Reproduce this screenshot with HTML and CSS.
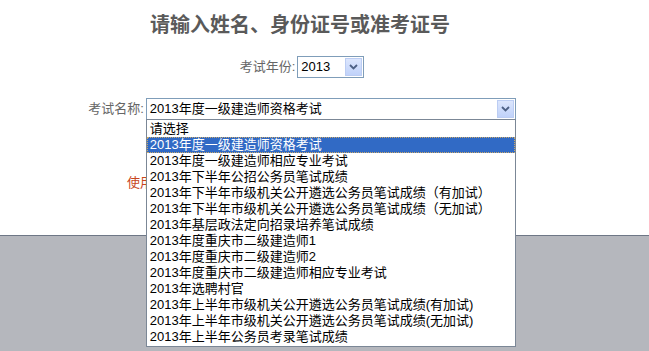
FILE: index.html
```html
<!DOCTYPE html>
<html>
  <head>
    <meta charset="utf-8">
    <title>成绩查询</title>
    <link rel="stylesheet" href="styles.css">
  </head>
  <body>
  <main class="query">
    <h1 class="query__title">请输入姓名、身份证号或准考证号</h1>
    <div class="field">
      <span class="field__label">考试年份:</span>
      <div class="combo combo--year">
        <span class="combo__value">2013</span>
        <span class="combo__btn"><svg width="9" height="6" viewBox="0 0 9 6"><path d="M1 1 L4.5 4.5 L8 1" fill="none" stroke="#4d6185" stroke-width="1.8"/></svg></span>
      </div>
    </div>
    <div class="field field--name">
      <span class="field__label">考试名称:</span>
      <div class="combo combo--name">
        <span class="combo__value">2013年度一级建造师资格考试</span>
        <span class="combo__btn"><svg width="9" height="6" viewBox="0 0 9 6"><path d="M1 1 L4.5 4.5 L8 1" fill="none" stroke="#4d6185" stroke-width="1.8"/></svg></span>
        <ul class="options">
          <li>请选择</li>
          <li class="options__active">2013年度一级建造师资格考试</li>
          <li>2013年度一级建造师相应专业考试</li>
          <li>2013年下半年公招公务员笔试成绩</li>
          <li>2013年下半年市级机关公开遴选公务员笔试成绩（有加试）</li>
          <li>2013年下半年市级机关公开遴选公务员笔试成绩（无加试）</li>
          <li>2013年基层政法定向招录培养笔试成绩</li>
          <li>2013年度重庆市二级建造师1</li>
          <li>2013年度重庆市二级建造师2</li>
          <li>2013年度重庆市二级建造师相应专业考试</li>
          <li>2013年选聘村官</li>
          <li>2013年上半年市级机关公开遴选公务员笔试成绩(有加试)</li>
          <li>2013年上半年市级机关公开遴选公务员笔试成绩(无加试)</li>
          <li>2013年上半年公务员考录笔试成绩</li>
        </ul>
      </div>
    </div>
    <p class="query__note">使用</p>
  </main>
  <footer class="bottom"></footer>
  </body>
</html>
```

FILE: styles.css
```css
* {
  box-sizing: border-box;
  margin: 0;
  padding: 0;
  font-family: "Liberation Sans", "Noto Sans CJK SC", sans-serif;
}

body, html {
  width: 100%;
  height: 100vh;
}

body {
  display: flex;
  flex-direction: column;
  background: #fff;
}

.query {
  height: 235px;
  width: 604px;
  padding-top: 15px;
}

.query__title {
  font-size: 20px;
  line-height: 20px;
  font-weight: bold;
  color: #5a5a5a;
  text-align: center;
  width: 600px;
}

.field {
  display: flex;
  justify-content: center;
  align-items: center;
  margin-top: 21px;
  font-size: 13px;
}

.field--name {
  margin-top: 20px;
}

.field__label {
  color: #666;
  margin-right: 2px;
  line-height: 22px;
}

.combo {
  position: relative;
  height: 22px;
  border: 1px solid #7f9db9;
  background: #fff;
  display: flex;
  align-items: center;
  color: #000;
}

.combo--year {
  width: 67px;
}

.combo--name {
  width: 370px;
}

.combo__value {
  flex: 1;
  padding-left: 3px;
  line-height: 20px;
  white-space: nowrap;
}

.combo__btn {
  width: 17px;
  height: 18px;
  margin-right: 1px;
  border: 1px solid #bccdf3;
  background: linear-gradient(#dce6fd, #c0d2fa);
  display: flex;
  align-items: center;
  justify-content: center;
}

.options {
  position: absolute;
  top: 20px;
  left: -1px;
  width: 370px;
  padding: 1px 0;
  background: #fff;
  border: 1px solid #7b8796;
  list-style: none;
  z-index: 10;
}

.options li {
  height: 16px;
  line-height: 16px;
  padding-left: 2px;
  white-space: nowrap;
  color: #000;
  border: 1px solid transparent;
  display: flex;
  align-items: center;
}

.options .options__active {
  background: #316ac5;
  color: #fff;
  border: 1px dotted #c9a86a;
}

.query__note {
  margin-top: 55px;
  padding-left: 127px;
  font-size: 13px;
  line-height: 16px;
  color: #c8461c;
  white-space: nowrap;
}

.bottom {
  flex: 1;
  background: #b5b7bd;
  border-top: 1px solid #6e7786;
}
```
